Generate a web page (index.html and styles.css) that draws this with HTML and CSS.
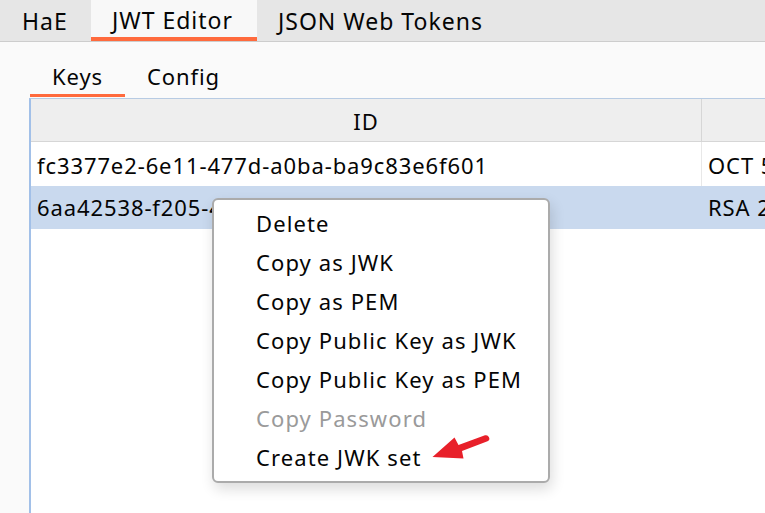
FILE: index.html
```html
<!DOCTYPE html>
<html>
<head>
<meta charset="utf-8">
<link rel="stylesheet" href="styles.css">
</head>
<body>
<div class="topbar">
  <div class="tab first">HaE</div>
  <div class="tab active">JWT Editor</div>
  <div class="tab">JSON Web Tokens</div>
</div>
<div class="content">
  <div class="subtabs">
    <div class="subtab active">Keys</div>
    <div class="subtab">Config</div>
  </div>
  <div class="table">
    <div class="row head">
      <div class="cell c1">ID</div>
      <div class="cell c2"></div>
    </div>
    <div class="row r1">
      <div class="cell c1">fc3377e2-6e11-477d-a0ba-ba9c83e6f601</div>
      <div class="cell c2">OCT 5</div>
    </div>
    <div class="row r2 selected">
      <div class="cell c1">6aa42538-f205-4</div>
      <div class="cell c2">RSA 2</div>
    </div>
  </div>
</div>
<div class="menu">
  <div class="item">Delete</div>
  <div class="item">Copy as JWK</div>
  <div class="item">Copy as PEM</div>
  <div class="item">Copy Public Key as JWK</div>
  <div class="item">Copy Public Key as PEM</div>
  <div class="item disabled">Copy Password</div>
  <div class="item">Create JWK set</div>
</div>
<svg class="arrow" width="70" height="40" viewBox="0 0 70 40">
  <path d="M67.8 4 Q69.5 6.8 66.5 8.2 L41 18 L42.5 25.5 L11.5 24 L33.5 4.5 L37.5 12 L64 2.3 Q66.8 1.6 67.8 4 Z" fill="#e8202a"/>
</svg>
</body>
</html>
```
FILE: styles.css
```css
html, body {
  margin: 0;
  padding: 0;
}
body {
  width: 765px;
  height: 513px;
  overflow: hidden;
  background: #fafafa;
  font-family: "Noto Sans", "Open Sans", sans-serif;
  font-size: 22px;
  letter-spacing: 0.9px;
  color: #050505;
  position: relative;
}
.topbar {
  height: 41px;
  background: #e6e6e6;
  border-bottom: 1px solid #cdcdcd;
  display: flex;
}
.tab {
  height: 41px;
  line-height: 42px;
  padding: 0 21px;
  box-sizing: border-box;
  font-size: 23px;
  letter-spacing: 1px;
}
.tab.first {
  width: 91px;
  padding-left: 22px;
}
.tab.active {
  width: 166px;
  background: #f8f8f8;
  border-bottom: 4px solid #ff6a3d;
  line-height: 40px;
}
.content {
  padding-left: 30px;
}
.subtabs {
  display: flex;
  height: 55px;
  align-items: flex-end;
}
.subtab {
  padding: 0 22px;
  height: 38px;
  line-height: 34px;
  box-sizing: border-box;
}
.subtab.active {
  width: 95px;
  border-bottom: 3px solid #ff6a3d;
}
.table {
  margin-top: 1px;
  border-top: 1px solid #b7cbe3;
  border-left: 2px solid #a2c0e8;
  margin-left: -1px;
  background: #ffffff;
  height: 420px;
}
.row {
  display: flex;
  white-space: nowrap;
}
.cell {
  box-sizing: border-box;
  padding-left: 6px;
  overflow: hidden;
}
.c1 {
  width: 670px;
}
.c2 {
  flex: 1;
  border-left: 1px solid #e8e8e8;
}
.head {
  height: 42px;
  background: #eeeeee;
  border-bottom: 1px solid #d6d6d6;
  line-height: 44px;
}
.head .c1 {
  text-align: center;
  padding-left: 0;
}
.head .c2 {
  border-left: 1px solid #d6d6d6;
}
.r1 {
  height: 44px;
  line-height: 46px;
}
.r2 {
  height: 43px;
  line-height: 43px;
}
.selected {
  background: #c9d9ee;
}
.selected .c2 {
  border-left-color: #c9d9ee;
}
.menu {
  position: absolute;
  left: 212px;
  top: 198px;
  width: 338px;
  box-sizing: border-box;
  background: #ffffff;
  border: 2px solid #ababab;
  border-radius: 6px;
  padding: 4px 0;
  box-shadow: 2px 6px 14px rgba(0, 0, 0, 0.14);
}
.item {
  height: 39px;
  line-height: 39px;
  padding-left: 42px;
  letter-spacing: 1.1px;
}
.item.disabled {
  color: #9a9a9a;
}
.arrow {
  position: absolute;
  left: 421px;
  top: 433px;
}
```
